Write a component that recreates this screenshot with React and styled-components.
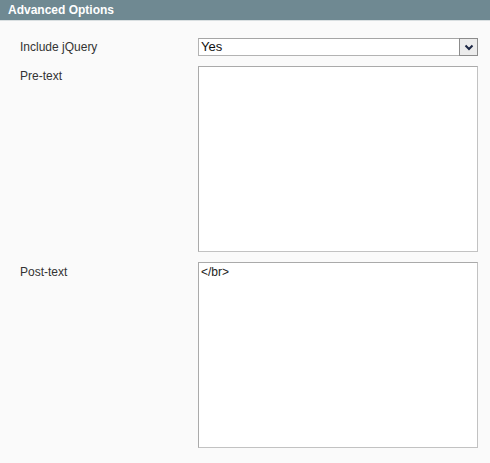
import React from "react";
import styled, { createGlobalStyle } from "styled-components";

const GlobalStyle = createGlobalStyle`
  html, body {
    margin: 0;
    padding: 0;
    background: #fafafa;
    font-family: "Liberation Sans", Arial, sans-serif;
  }
`;

const Panel = styled.div`
  width: 490px;
  min-height: 463px;
  background: #fafafa;
`;

const PanelHeader = styled.div`
  height: 20px;
  background: #6f8992;
  border-bottom: 1px solid #d9dfe1;
  color: #fff;
  font-weight: bold;
  font-size: 12px;
  line-height: 20px;
  padding-left: 8px;
`;

const FormBody = styled.div`
  display: flex;
  flex-direction: column;
  gap: 10px;
  padding: 17px 13px 0 20px;
`;

const Row = styled.div`
  display: grid;
  grid-template-columns: 178px 280px;
  align-items: start;
`;

const Label = styled.label`
  font-size: 12px;
  color: #333;
  line-height: 16px;
  padding-top: ${(p) => p.$offset || 1}px;
`;

const SelectBox = styled.div`
  display: flex;
  height: 18px;
  box-sizing: border-box;
  background: #fff;
  border: 1px solid #b3b3b3;
  border-top-color: #a5a5a5;
`;

const SelectValue = styled.span`
  flex: 1;
  font-size: 13px;
  line-height: 16px;
  color: #111;
  padding-left: 2px;
`;

const ArrowButton = styled.span`
  width: 19px;
  box-sizing: border-box;
  background: #ececec;
  border: 1px solid #8c8c8c;
  margin: -1px -1px -1px 0;
  display: flex;
  align-items: center;
  justify-content: center;
`;

const TextArea = styled.textarea`
  display: block;
  width: 280px;
  height: 186px;
  box-sizing: border-box;
  resize: none;
  background: #fff;
  border: 1px solid #c2c2c2;
  border-top-color: #aaa;
  border-left-color: #aaa;
  font-family: "Liberation Sans", Arial, sans-serif;
  font-size: 12px;
  color: #222;
  padding: 2px 2px;
  margin: 0;
  outline: none;
`;

export default function App() {
  return (
    <Panel>
      <GlobalStyle />
      <PanelHeader>Advanced Options</PanelHeader>
      <FormBody>
        <Row>
          <Label $offset={1}>Include jQuery</Label>
          <SelectBox>
            <SelectValue>Yes</SelectValue>
            <ArrowButton>
              <svg width="10" height="7" viewBox="0 0 10 7">
                <path d="M1.5 1.5 L5 5 L8.5 1.5" fill="none" stroke="#1c2744" strokeWidth="2" />
              </svg>
            </ArrowButton>
          </SelectBox>
        </Row>
        <Row>
          <Label $offset={2}>Pre-text</Label>
          <TextArea defaultValue="" />
        </Row>
        <Row>
          <Label $offset={2}>Post-text</Label>
          <TextArea defaultValue="</br>" />
        </Row>
      </FormBody>
    </Panel>
  );
}
